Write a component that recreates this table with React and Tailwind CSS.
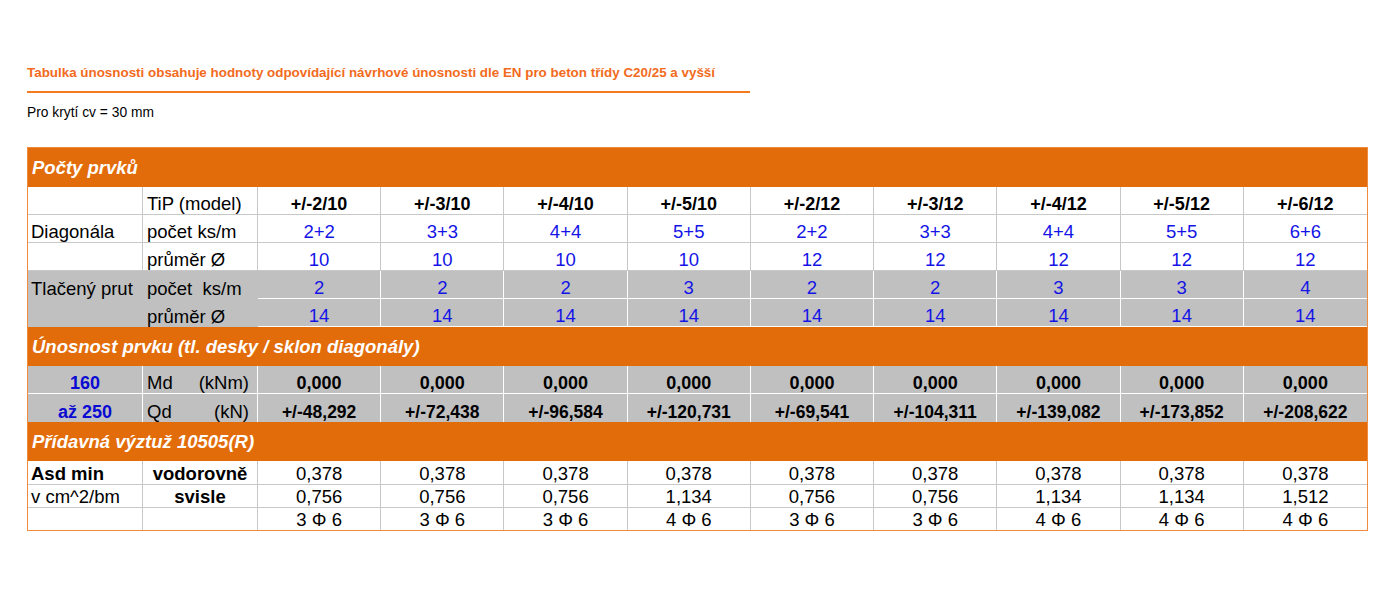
const models = ['+/-2/10', '+/-3/10', '+/-4/10', '+/-5/10', '+/-2/12', '+/-3/12', '+/-4/12', '+/-5/12', '+/-6/12'];
const pocet = ['2+2', '3+3', '4+4', '5+5', '2+2', '3+3', '4+4', '5+5', '6+6'];
const prumer = ['10', '10', '10', '10', '12', '12', '12', '12', '12'];
const tlacPocet = ['2', '2', '2', '3', '2', '2', '3', '3', '4'];
const tlacPrumer = Array(9).fill('14');
const md = Array(9).fill('0,000');
const qd = ['+/-48,292', '+/-72,438', '+/-96,584', '+/-120,731', '+/-69,541', '+/-104,311', '+/-139,082', '+/-173,852', '+/-208,622'];
const vodorovne = Array(9).fill('0,378');
const svisle = ['0,756', '0,756', '0,756', '1,134', '0,756', '0,756', '1,134', '1,134', '1,512'];
const phi = ['3 Φ 6', '3 Φ 6', '3 Φ 6', '4 Φ 6', '3 Φ 6', '3 Φ 6', '4 Φ 6', '4 Φ 6', '4 Φ 6'];

function SectionRow({ title }) {
  return (
    <tr>
      <td colSpan={11} className="h-[39px] bg-[#e36c0a] p-0 pl-[4px] align-middle text-[18.5px] font-bold italic text-white">
        {title}
      </td>
    </tr>
  );
}

// data cells for one row; grey rows get white grid lines
function Cells({ values, grey, className = '', last }) {
  return values.map((v, i) => (
    <td
      key={i}
      className={`p-0 text-center align-bottom ${i < 8 ? 'border-r' : ''} ${last ? '' : 'border-b'} ${
        grey ? 'border-white' : 'border-[#c8c8c8]'
      } ${className}`}
    >
      {v}
    </td>
  ));
}

export default function App() {
  return (
    <div className="min-h-[606px] w-[1395px] bg-white pl-[27px] pt-[66px] font-['Liberation_Sans',Arial,sans-serif] text-black">
      <div className="w-[723px] border-b-2 border-[#f47b20] pb-[11px] text-[13.4px] font-bold leading-[14px] text-[#f26b1d]">
        Tabulka únosnosti obsahuje hodnoty odpovídající návrhové únosnosti dle EN pro beton třídy C20/25 a vyšší
      </div>
      <div className="mt-[12px] text-[13.8px] leading-[16px]">Pro krytí cv = 30 mm</div>

      <div className="mt-[26px] w-[1341px] border border-[#ef8a3e]">
        <table className="w-full table-fixed border-separate border-spacing-0 text-[18.5px] leading-[20px]">
          <colgroup>
            <col className="w-[115px]" />
            <col className="w-[115px]" />
            {models.map((m) => (
              <col key={m} />
            ))}
          </colgroup>
          <tbody>
            <SectionRow title="Počty prvků" />

            <tr className="h-[28px]">
              <td className="border-r border-b border-[#c8c8c8] p-0 align-bottom" />
              <td className="border-r border-b border-[#c8c8c8] p-0 pl-[4px] align-bottom">TiP (model)</td>
              <Cells values={models} className="text-[18px] font-bold" />
            </tr>
            <tr className="h-[28px]">
              <td className="border-r border-b border-[#c8c8c8] p-0 pl-[3px] align-bottom">Diagonála</td>
              <td className="border-r border-b border-[#c8c8c8] p-0 pl-[4px] align-bottom">počet ks/m</td>
              <Cells values={pocet} className="text-[#1414e6]" />
            </tr>
            <tr className="h-[28px]">
              <td className="border-r border-b border-[#c8c8c8] p-0 align-bottom" />
              <td className="border-r border-b border-[#c8c8c8] p-0 pl-[4px] align-bottom">průměr Ø</td>
              <Cells values={prumer} className="text-[#1414e6]" />
            </tr>
            <tr className="h-[28px] bg-[#c0c0c0]">
              <td className="p-0 pl-[3px] align-bottom whitespace-nowrap">Tlačený prut</td>
              <td className="p-0 pl-[4px] align-bottom whitespace-pre">počet  ks/m</td>
              <Cells values={tlacPocet} grey className="text-[#1414e6]" />
            </tr>
            <tr className="h-[28px] bg-[#c0c0c0]">
              <td className="p-0 align-bottom" />
              <td className="p-0 pl-[4px] align-bottom">průměr Ø</td>
              <Cells values={tlacPrumer} grey className="text-[#1414e6]" />
            </tr>

            <SectionRow title="Únosnost prvku (tl. desky / sklon diagonály)" />

            <tr className="h-[28px] bg-[#c0c0c0]">
              <td className="border-r border-b border-white p-0 text-center align-bottom text-[18px] font-bold text-[#0a0ad2]">160</td>
              <td className="border-r border-b border-white p-0 pl-[4px] pr-[8px] align-bottom">
                <div className="flex justify-between">
                  <span>Md</span>
                  <span>(kNm)</span>
                </div>
              </td>
              <Cells values={md} grey className="text-[18px] font-bold" />
            </tr>
            <tr className="h-[28px] bg-[#c0c0c0]">
              <td className="border-r border-white p-0 text-center align-bottom text-[18px] font-bold text-[#0a0ad2]">až 250</td>
              <td className="border-r border-white p-0 pl-[4px] pr-[8px] align-bottom">
                <div className="flex justify-between">
                  <span>Qd</span>
                  <span>(kN)</span>
                </div>
              </td>
              <Cells values={qd} grey last className="text-[17.5px] font-bold" />
            </tr>

            <SectionRow title="Přídavná výztuž 10505(R)" />

            <tr className="h-[24px]">
              <td className="border-r border-b border-[#c8c8c8] p-0 pl-[3px] align-bottom font-bold">Asd min</td>
              <td className="border-r border-b border-[#c8c8c8] p-0 text-center align-bottom font-bold">vodorovně</td>
              <Cells values={vodorovne} />
            </tr>
            <tr className="h-[23px]">
              <td className="border-r border-b border-[#c8c8c8] p-0 pl-[3px] align-bottom">v cm^2/bm</td>
              <td className="border-r border-b border-[#c8c8c8] p-0 text-center align-bottom font-bold">svisle</td>
              <Cells values={svisle} />
            </tr>
            <tr className="h-[22px]">
              <td className="border-r border-[#c8c8c8] p-0" />
              <td className="border-r border-[#c8c8c8] p-0" />
              <Cells values={phi} last />
            </tr>
          </tbody>
        </table>
      </div>
    </div>
  );
}
